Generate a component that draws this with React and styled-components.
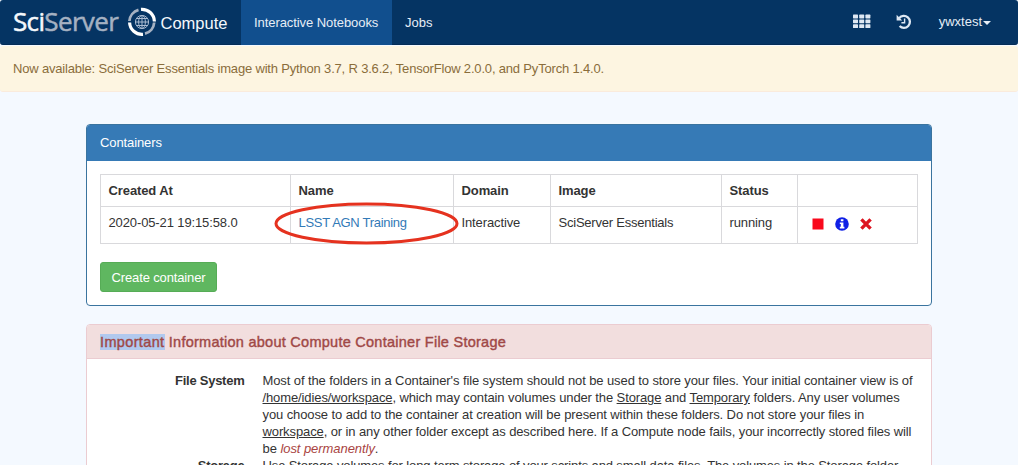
import React from "react";
import styled, { createGlobalStyle } from "styled-components";

const Global = createGlobalStyle`
  * { box-sizing: border-box; }
  html, body { margin: 0; height: 100%; overflow: hidden; }
  body {
    background: #f4f9ff;
    font-family: "Liberation Sans", Arial, sans-serif;
    font-size: 13px;
    line-height: 17px;
    color: #333;
  }
`;

const Page = styled.div`
  height: 465px;
  overflow: hidden;
`;

const Navbar = styled.nav`
  display: flex;
  align-items: stretch;
  height: 45px;
  background: #053463;
  border-bottom: 1px solid #042c56;
  border-radius: 3px;
  color: #e6edf6;
`;

const Brand = styled.a`
  display: flex;
  align-items: center;
  width: 241px;
  padding-left: 13px;
  color: #f4f8fc;
`;

const Wordmark = styled.span`
  width: 106px;
  font-family: "Open Sans", sans-serif;
  font-size: 26px;
  line-height: 30px;
  letter-spacing: -0.65px;
  padding-bottom: 2px;
  white-space: nowrap;
  -webkit-text-stroke: 0.5px currentColor;
`;

const Muted = styled.span`
  color: #a5b1c2;
`;

const Globe = styled.svg`
  width: 30px;
  height: 30px;
  margin: 0 4px 0 7.5px;
  flex: none;
`;

const Product = styled.span`
  font-size: 16.5px;
  padding-top: 2px;
`;

const NavItem = styled.a`
  padding: 14px 13px 0;
  white-space: nowrap;
  letter-spacing: ${(p) => p.$spacing || "0"};
  width: ${(p) => p.$width || "auto"};
  margin-bottom: ${(p) => (p.$active ? "-1px" : "0")};
  background: ${(p) => (p.$active ? "#114f8e" : "transparent")};
`;

const Tools = styled.div`
  display: flex;
  margin-left: auto;
  padding-right: 27px;
`;

const ToolIcon = styled.svg`
  width: 18px;
  height: 15px;
  margin: 14px 25px 0 0;
  fill: #dfe8f3;
`;

const User = styled.a`
  display: flex;
  align-items: center;
  height: 43px;
  gap: 1px;
`;

const Caret = styled.i`
  border: 4px solid transparent;
  border-top-color: #e6edf6;
  border-bottom: 0;
  margin-top: 3px;
`;

const Notice = styled.div`
  height: 46px;
  margin-top: 1px;
  padding: 14px 13px;
  background: #fdf5e1;
  border-bottom: 1px solid #faebdc;
  border-radius: 3px;
  color: #8a6d3b;
  white-space: nowrap;
  letter-spacing: -0.18px;
`;

const Content = styled.main`
  width: 846px;
  margin: 32px 0 0 86px;
`;

const Panel = styled.section`
  background: #fff;
  border: 1px solid ${(p) => (p.$danger ? "#ebccd1" : "#3a749f")};
  border-radius: 4px;
  margin-bottom: 18px;
  height: ${(p) => p.$height};
  overflow: hidden;
`;

const PanelTitle = styled.header`
  height: 36px;
  padding: 9px 13px;
  background: #367ab6;
  color: #fff;
  letter-spacing: -0.1px;
`;

const WarningTitle = styled.header`
  height: 34px;
  padding: 9px 13px;
  font-size: 14.5px;
  font-weight: 500;
  letter-spacing: 0.26px;
  background: #f2dede;
  border-bottom: 1px solid #ebccd1;
  color: #a04846;
  -webkit-text-stroke: 0.4px #a04846;
  white-space: nowrap;
`;

const Selected = styled.span`
  background: #b1c9ee;
  letter-spacing: 0.36px;
`;

const PanelBody = styled.div`
  padding: 13px;
`;

const Table = styled.table`
  width: 817px;
  table-layout: fixed;
  border-collapse: collapse;
`;

const cell = `
  border: 1px solid #d9d9dc;
  padding: 0 7px 0 7.5px;
  text-align: left;
  white-space: nowrap;
`;

const Th = styled.th`
  ${cell}
  height: 32px;
  letter-spacing: -0.1px;
`;

const Td = styled.td`
  ${cell}
  height: 37px;
  padding-bottom: 5px;
  letter-spacing: ${(p) => p.$spacing || "-0.12px"};
`;

const NameCell = styled(Td)`
  position: relative;
  overflow: visible;
  color: #337ab7;
`;

const Ring = styled.svg`
  position: absolute;
  left: -17px;
  top: -6px;
  width: 186px;
  height: 46px;
  overflow: visible;
`;

const Actions = styled.div`
  display: flex;
  align-items: center;
  gap: 11px;
  padding: 3px 0 0 6.5px;
`;

const ActionIcon = styled.svg`
  width: ${(p) => p.$size}px;
  height: ${(p) => p.$size}px;
`;

const CreateButton = styled.button`
  display: block;
  width: 117px;
  height: 30px;
  margin-top: 18px;
  padding: 0;
  border: 1px solid #56ac56;
  border-radius: 3px;
  background: #5fb760;
  color: #fff;
  font: inherit;
  letter-spacing: -0.14px;
`;

const Details = styled.dl`
  display: grid;
  grid-template-columns: 144.5px 1fr;
  column-gap: 18px;
  margin: 0;
  padding: 13px 13px 0 13px;
`;

const Term = styled.dt`
  font-weight: bold;
  text-align: right;
  letter-spacing: -0.25px;
`;

const Desc = styled.dd`
  margin: 0;
`;

const Line = styled.span`
  display: block;
  height: 17.1px;
  white-space: nowrap;
  letter-spacing: ${(p) => p.$spacing || "-0.1px"};
`;

const Lost = styled.em`
  color: #a94442;
`;

const columns = [
  ["Created At", 190],
  ["Name", 163],
  ["Domain", 97],
  ["Image", 171],
  ["Status", 76],
  ["", 120],
];

function App() {
  return (
    <Page>
      <Global />
      <Navbar>
        <Brand>
          <Wordmark>Sci<Muted>Server</Muted></Wordmark>
          <Globe viewBox="0 0 30 30" fill="none">
            <path d="M2.4 14A12.6 12.6 0 0 1 11.5 2.9" stroke="#a5b1c2" strokeWidth="2.8" />
            <path d="M14 2.4A12.4 12.4 0 0 1 27.4 14.5" stroke="#fff" strokeWidth="3.2" />
            <path d="M27.2 15.5A12.4 12.4 0 0 1 18 26.6" stroke="#a5b1c2" strokeWidth="2.8" />
            <path d="M2.6 15.5A12.4 12.4 0 0 0 16 27.4" stroke="#fff" strokeWidth="3.2" />
            <g stroke="#a9bad0" strokeWidth="1">
              <circle cx="15" cy="15" r="6.6" />
              <ellipse cx="15" cy="15" rx="3.4" ry="6.6" />
              <path d="M15 8v14M8 15h14M9.5 11.5h11M9.5 18.5h11" />
            </g>
          </Globe>
          <Product>Compute</Product>
        </Brand>
        <NavItem $active $width="151px" $spacing="-0.07px">Interactive Notebooks</NavItem>
        <NavItem>Jobs</NavItem>
        <Tools>
          <ToolIcon viewBox="0 0 18 15">
            {[0.6, 5.4, 10.2].map((y) =>
              [0, 6.2, 12.4].map((x) => <rect key={`${x}-${y}`} x={x} y={y} width="5" height="3.8" rx="0.6" />)
            )}
          </ToolIcon>
          <ToolIcon viewBox="0 0 18 15">
            <path d="M3.2 4.1A6 6 0 1 1 3.6 12" fill="none" stroke="#dfe8f3" strokeWidth="2.3" />
            <path d="M0.6 0.8V6.4H6.2Z" />
            <path d="M8.6 4.6v4.1H5.4" fill="none" stroke="#dfe8f3" strokeWidth="1.4" />
          </ToolIcon>
          <User>ywxtest<Caret /></User>
        </Tools>
      </Navbar>
      <Notice>Now available: SciServer Essentials image with Python 3.7, R 3.6.2, TensorFlow 2.0.0, and PyTorch 1.4.0.</Notice>
      <Content>
        <Panel $height="182px">
          <PanelTitle>Containers</PanelTitle>
          <PanelBody>
            <Table>
              <colgroup>
                {columns.map(([name, width]) => <col key={name} width={width} />)}
              </colgroup>
              <thead>
                <tr>{columns.map(([name]) => <Th key={name}>{name}</Th>)}</tr>
              </thead>
              <tbody>
                <tr>
                  <Td>2020-05-21 19:15:58.0</Td>
                  <NameCell $spacing="-0.3px">
                    LSST AGN Training
                    <Ring viewBox="0 0 186 46">
                      <ellipse cx="92.5" cy="22.5" rx="90.5" ry="19.5" fill="none" stroke="#e5321f" strokeWidth="3" />
                    </Ring>
                  </NameCell>
                  <Td>Interactive</Td>
                  <Td $spacing="-0.22px">SciServer Essentials</Td>
                  <Td>running</Td>
                  <Td>
                    <Actions>
                      <ActionIcon $size={12} viewBox="0 0 12 12"><path d="M.5.5h11v11H.5z" fill="#f9091c" /></ActionIcon>
                      <ActionIcon $size={14} viewBox="0 0 14 14">
                        <circle cx="7" cy="7" r="6.8" fill="#1020e6" />
                        <path d="M5.8 2.2h2.6v2H5.8zM4.8 5.4h3.6v4.4h1v1.6H4.8V9.8h1V7h-1z" fill="#fff" />
                      </ActionIcon>
                      <ActionIcon $size={12} viewBox="0 0 12 12"><path d="M1.4 1.4 10.6 10.6M10.6 1.4 1.4 10.6" stroke="#dd1420" strokeWidth="3.4" /></ActionIcon>
                    </Actions>
                  </Td>
                </tr>
              </tbody>
            </Table>
            <CreateButton>Create container</CreateButton>
          </PanelBody>
        </Panel>
        <Panel $danger $height="240px">
          <WarningTitle><Selected>Important</Selected> Information about Compute Container File Storage</WarningTitle>
          <Details>
            <Term>File System</Term>
            <Desc>
              <Line>Most of the folders in a Container's file system should not be used to store your files. Your initial container view is of</Line>
              <Line $spacing="-0.11px"><u>/home/idies/workspace</u>, which may contain volumes under the <u>Storage</u> and <u>Temporary</u> folders. Any user volumes</Line>
              <Line>you choose to add to the container at creation will be present within these folders. Do not store your files in</Line>
              <Line $spacing="-0.11px"><u>workspace</u>, or in any other folder except as described here. If a Compute node fails, your incorrectly stored files will</Line>
              <Line $spacing="-0.06px">be <Lost>lost permanently</Lost>.</Line>
            </Desc>
            <Term>Storage</Term>
            <Desc>
              <Line $spacing="-0.12px">Use Storage volumes for long term storage of your scripts and small data files. The volumes in the Storage folder</Line>
            </Desc>
          </Details>
        </Panel>
      </Content>
    </Page>
  );
}

export default App;
